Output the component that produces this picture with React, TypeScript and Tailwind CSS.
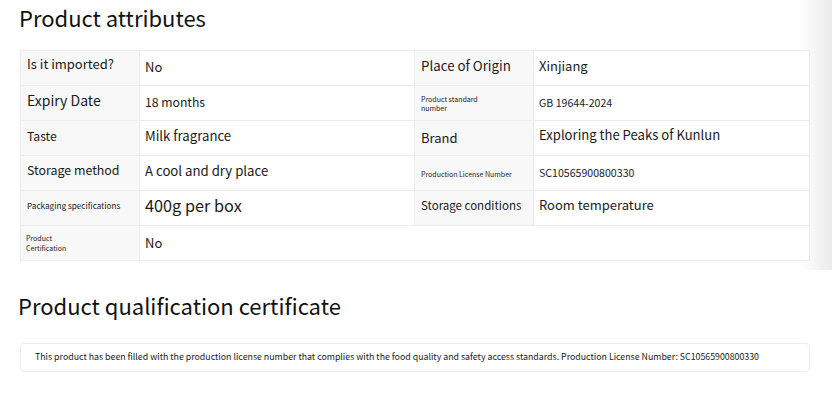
import React from "react";

type Cell = { text: string; cls: string };

const font = { fontFamily: '"Noto Sans CJK SC", "Noto Sans", sans-serif' };

const rows: [Cell, Cell, Cell, Cell][] = [
  [
    { text: "Is it imported?", cls: "text-[13px] pb-[9px]" },
    { text: "No", cls: "text-[13px] pb-[3px]" },
    { text: "Place of Origin", cls: "text-[13.3px] pb-[4px]" },
    { text: "Xinjiang", cls: "text-[13px] pb-[4px]" },
  ],
  [
    { text: "Expiry Date", cls: "text-[14px] px-[7px] pb-[6px]" },
    { text: "18 months", cls: "text-[12.2px] pb-[2px]" },
    { text: "Product standard\nnumber", cls: "text-[7px] leading-[9px] pt-[2px]" },
    { text: "GB 19644-2024", cls: "text-[10.6px]" },
  ],
  [
    { text: "Taste", cls: "text-[12.2px] pb-[4px]" },
    { text: "Milk fragrance", cls: "text-[13.2px] pb-[4px]" },
    { text: "Brand", cls: "text-[13px] pb-[1px]" },
    { text: "Exploring the Peaks of Kunlun", cls: "text-[13.1px] pb-[6px]" },
  ],
  [
    { text: "Storage method", cls: "text-[12.4px] pb-[6px]" },
    { text: "A cool and dry place", cls: "text-[13.2px] pb-[4px]" },
    { text: "Production License Number", cls: "text-[7px] pt-[2px]" },
    { text: "SC10565900800330", cls: "text-[10.6px]" },
  ],
  [
    { text: "Packaging specifications", cls: "text-[8.2px] pb-[6px]" },
    { text: "400g per box", cls: "text-[16.3px] pb-[5px]" },
    { text: "Storage conditions", cls: "text-[11.5px] pb-[5px]" },
    { text: "Room temperature", cls: "text-[13px] pb-[6px]" },
  ],
];

function CellBox({ c, label, right }: { c: Cell; label: boolean; right?: boolean }) {
  return (
    <div
      className={[
        "h-[35px] flex items-center whitespace-pre-line text-[#1a1a1a] border-b border-[#ececec]",
        label ? "bg-[#f8f8f8] pl-[6px]" : "bg-white pl-[5px]",
        right ? "" : "border-r",
        c.cls,
      ].join(" ")}
    >
      {c.text}
    </div>
  );
}

export default function App() {
  return (
    <div className="relative w-[832px] h-[397px] bg-white overflow-hidden" style={font}>
      {/* right edge shade */}
      <div className="absolute right-0 top-0 w-[32px] h-[270px] bg-gradient-to-r from-white/0 to-[#ebebeb]" />

      <div className="relative pl-[19px] pt-[1px]">
        <h2 className="text-[22px] leading-[32px] text-[#111]">Product attributes</h2>

        <div className="mt-[17px] w-[790px] ml-[1px] border border-[#ececec] border-b-0 grid grid-cols-[119px_275px_119px_1fr]">
          {rows.map((r, i) => (
            <React.Fragment key={i}>
              <CellBox c={r[0]} label />
              <CellBox c={r[1]} label={false} />
              <CellBox c={r[2]} label />
              <CellBox c={r[3]} label={false} right />
            </React.Fragment>
          ))}
          <div className="h-[35px] flex flex-col justify-center bg-[#f8f8f8] pl-[5px] text-[7px] leading-[10px] text-[#1a1a1a] border-b border-r border-[#ececec]">
            <span>Product</span>
            <span>Certification</span>
          </div>
          <div className="col-span-3 h-[35px] flex items-center pl-[5px] text-[13px] text-[#1a1a1a] bg-white border-b border-[#ececec]">
            No
          </div>
        </div>
      </div>

      <div className="relative pl-[18px] mt-[26px]">
        <h2 className="text-[22px] leading-[36px] text-[#111]">Product qualification certificate</h2>
        <div className="mt-[20px] ml-[2px] w-[790px] h-[29px] border border-[#ececec] rounded-[4px] flex items-center pl-[14px] pb-[1px] text-[8.8px] text-[#1a1a1a] whitespace-nowrap">
          This product has been filled with the production license number that complies with the food quality and safety access standards. Production License Number: SC10565900800330
        </div>
      </div>
    </div>
  );
}
